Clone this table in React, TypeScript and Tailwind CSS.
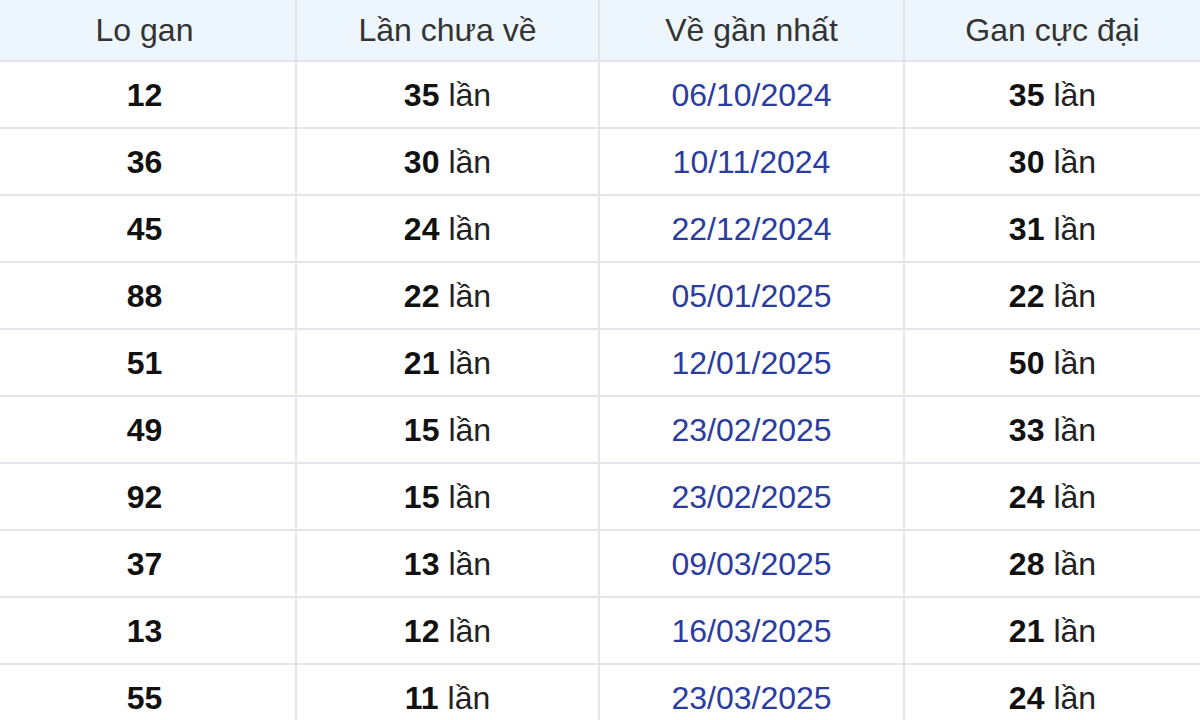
const rows = [
  { lo: "12", chua: 35, date: "06/10/2024", max: 35 },
  { lo: "36", chua: 30, date: "10/11/2024", max: 30 },
  { lo: "45", chua: 24, date: "22/12/2024", max: 31 },
  { lo: "88", chua: 22, date: "05/01/2025", max: 22 },
  { lo: "51", chua: 21, date: "12/01/2025", max: 50 },
  { lo: "49", chua: 15, date: "23/02/2025", max: 33 },
  { lo: "92", chua: 15, date: "23/02/2025", max: 24 },
  { lo: "37", chua: 13, date: "09/03/2025", max: 28 },
  { lo: "13", chua: 12, date: "16/03/2025", max: 21 },
  { lo: "55", chua: 11, date: "23/03/2025", max: 24 },
];

const headers = ["Lo gan", "Lần chưa về", "Về gần nhất", "Gan cực đại"];

const cell = "flex items-center justify-center border-b-2 border-[#e3e5ea]";
const sep = "border-r-2";

export default function App() {
  return (
    <div className="h-[720px] w-[1200px] overflow-hidden bg-white font-['Liberation_Sans',Arial,sans-serif] text-[32px]">
      <div className="grid grid-cols-[297px_303px_305px_295px]">
        {headers.map((h, i) => (
          <div
            key={h}
            className={`${cell} ${i < 3 ? sep : ""} ${i === 0 ? "pr-[6px]" : ""} h-[62px] bg-[#eef6fd] text-[#333333]`}
          >
            {h}
          </div>
        ))}
        {rows.map((r, idx) => (
          <div key={idx} className="contents">
            <div className={`${cell} ${sep} h-[67px] pr-[6px] font-bold text-[#111111]`}>{r.lo}</div>
            <div className={`${cell} ${sep} h-[67px] text-[#222222]`}>
              <span className="mr-[9px] font-bold text-[#111111]">{r.chua}</span>lần
            </div>
            <div className={`${cell} ${sep} h-[67px] text-[#2b3c9f]`}>{r.date}</div>
            <div className={`${cell} h-[67px] text-[#222222]`}>
              <span className="mr-[9px] font-bold text-[#111111]">{r.max}</span>lần
            </div>
          </div>
        ))}
      </div>
    </div>
  );
}
